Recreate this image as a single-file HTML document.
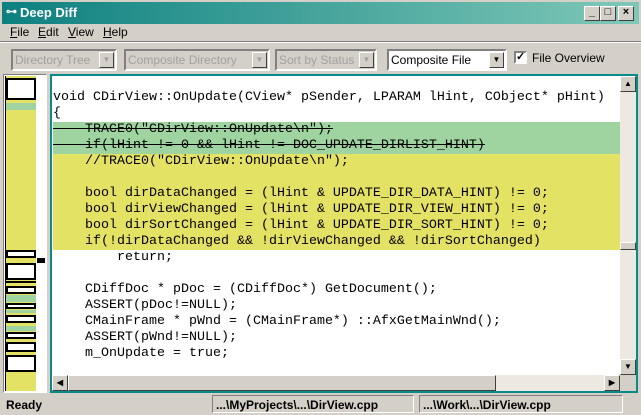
<!DOCTYPE html>
<html><head><style>
*{margin:0;padding:0;box-sizing:border-box}
body{width:641px;height:415px;background:#d4d0c8;font-family:"Liberation Sans",sans-serif;font-size:12px;position:relative;overflow:hidden}
.a{position:absolute}
.title{left:0;top:0;width:641px;height:24px;background:linear-gradient(90deg,#0d8080,#7fc8b8);border:2px solid #d4d0c8;border-bottom:0}
.title span{position:absolute;left:18px;top:3px;color:#fff;font-weight:bold;font-size:13px}
.btn{width:16px;height:14px;background:#d4d0c8;border:1px solid;border-color:#fff #404040 #404040 #fff;top:4px;font-size:11px;text-align:center;line-height:11px;font-weight:bold}
.menu span{position:absolute;top:25px;font-size:12px}
.combo{height:22px;border:2px solid;border-color:#808080 #fff #fff #808080;background:#d4d0c8;top:49px;color:#a0a0a0;font-size:12px;padding:2px 0 0 2px}
.combo i{position:absolute;right:1px;top:1px;width:15px;height:16px;background:#d4d0c8;border:1px solid;border-color:#fff #404040 #404040 #fff;font-style:normal;font-size:8px;text-align:center;line-height:14px;color:#a0a0a0}
.code{left:50px;top:74px;width:588px;height:319px;border:2px solid #0a8a8a;background:#fff}
.ln{position:absolute;left:1px;font-family:"Liberation Mono",monospace;font-size:13.33px;line-height:16px;height:16px;white-space:pre;width:567px}
.g{background:#9fd4a0}.y{background:#e4e264}
.s{text-decoration:line-through}
.ov div{position:absolute;left:6px;width:30px}
.wb{background:#fff;border:2px solid #000}
.status span{position:absolute;top:398px;font-weight:bold;font-size:12px}
.pan{top:395px;height:18px;border:1px solid;border-color:#808080 #fff #fff #808080}
</style></head><body>
<div class="a title"><span style="left:4px;font-size:11px">⊶</span><span>Deep Diff</span>
<div class="a btn" style="left:582px;top:4px;height:15px">_</div><div class="a btn" style="left:598px;top:4px;height:15px">□</div><div class="a btn" style="left:616px;top:4px;height:15px">×</div></div>
<div class="menu"><span style="left:10px"><u>F</u>ile</span><span style="left:38px"><u>E</u>dit</span><span style="left:68px"><u>V</u>iew</span><span style="left:103px"><u>H</u>elp</span></div>
<div class="a" style="left:0;top:41px;width:641px;height:2px;border-top:1px solid #808080;border-bottom:1px solid #fff"></div>
<div class="a combo" style="left:11px;width:106px">Directory Tree<i>▼</i></div>
<div class="a combo" style="left:124px;width:146px">Composite Directory<i>▼</i></div>
<div class="a combo" style="left:275px;width:102px">Sort by Status<i>▼</i></div>
<div class="a combo" style="left:387px;width:120px;background:#fff;color:#000">Composite File<i style="color:#000">▼</i></div>
<div class="a" style="left:514px;top:51px;width:13px;height:13px;background:#fff;border:2px solid;border-color:#808080 #fff #fff #808080;font-size:11px;line-height:9px;font-weight:bold">✓</div>
<div class="a" style="left:532px;top:51px;font-size:12px">File Overview</div>
<div class="a" style="left:3px;top:74px;width:44px;height:319px;border:1px solid;border-color:#808080 #fff #fff #808080;background:#fff"></div>
<div class="a" style="left:5px;top:76px;width:31px;height:315px;background:#e4e264;border-left:1px solid #000"></div>
<div class="ov">
<div class="wb" style="top:78px;height:22px"></div>
<div class="g" style="top:103px;height:7px"></div>
<div class="wb" style="top:250px;height:8px"></div>
<div class="wb" style="top:263px;height:17px"></div>
<div style="top:281px;height:2px;background:#000"></div>
<div class="wb" style="top:286px;height:8px"></div>
<div class="g" style="top:295px;height:7px"></div>
<div class="wb" style="top:303px;height:6px"></div>
<div class="g" style="top:310px;height:3px"></div>
<div class="wb" style="top:315px;height:8px"></div>
<div class="g" style="top:326px;height:5px"></div>
<div class="wb" style="top:332px;height:7px"></div>
<div class="wb" style="top:342px;height:10px"></div>
<div class="wb" style="top:355px;height:17px"></div>
</div>
<div class="a" style="left:37px;top:258px;width:8px;height:5px;background:#000"></div>
<div class="a code">
<div class="ln" style="top:14px">void CDirView::OnUpdate(CView* pSender, LPARAM lHint, CObject* pHint)</div>
<div class="ln" style="top:30px">{</div>
<div class="ln g" style="top:46px"><span class="s">    TRACE0("CDirView::OnUpdate\n");</span></div>
<div class="ln g" style="top:62px"><span class="s">    if(lHint != 0 &amp;&amp; lHint != DOC_UPDATE_DIRLIST_HINT)</span></div>
<div class="ln y" style="top:78px">    //TRACE0("CDirView::OnUpdate\n");</div>
<div class="ln y" style="top:94px"> </div>
<div class="ln y" style="top:110px">    bool dirDataChanged = (lHint &amp; UPDATE_DIR_DATA_HINT) != 0;</div>
<div class="ln y" style="top:126px">    bool dirViewChanged = (lHint &amp; UPDATE_DIR_VIEW_HINT) != 0;</div>
<div class="ln y" style="top:142px">    bool dirSortChanged = (lHint &amp; UPDATE_DIR_SORT_HINT) != 0;</div>
<div class="ln y" style="top:158px">    if(!dirDataChanged &amp;&amp; !dirViewChanged &amp;&amp; !dirSortChanged)</div>
<div class="ln" style="top:174px">        return;</div>
<div class="ln" style="top:206px">    CDiffDoc * pDoc = (CDiffDoc*) GetDocument();</div>
<div class="ln" style="top:222px">    ASSERT(pDoc!=NULL);</div>
<div class="ln" style="top:238px">    CMainFrame * pWnd = (CMainFrame*) ::AfxGetMainWnd();</div>
<div class="ln" style="top:254px">    ASSERT(pWnd!=NULL);</div>
<div class="ln" style="top:270px">    m_OnUpdate = true;</div>
<div class="a" style="left:568px;top:0;width:16px;height:299px;background:#ede8e0"></div>
<div class="a btn" style="left:568px;top:0;height:16px;font-size:8px;line-height:14px">▲</div>
<div class="a btn" style="left:568px;top:166px;height:8px"></div>
<div class="a btn" style="left:568px;top:283px;height:16px;font-size:8px;line-height:14px">▼</div>
<div class="a" style="left:0;top:299px;width:568px;height:16px;background:#ede8e0"></div>
<div class="a btn" style="left:0;top:299px;height:16px;font-size:8px;line-height:14px">◀</div>
<div class="a btn" style="left:16px;top:299px;width:428px;height:16px"></div>
<div class="a btn" style="left:552px;top:299px;height:16px;font-size:8px;line-height:14px">▶</div>
<div class="a" style="left:568px;top:299px;width:16px;height:16px;background:#d4d0c8"></div>
</div>
<div class="status"><span style="left:6px">Ready</span>
<div class="a pan" style="left:212px;width:202px"></div><span style="left:216px">...\MyProjects\...\DirView.cpp</span>
<div class="a pan" style="left:419px;width:204px"></div><span style="left:423px">...\Work\...\DirView.cpp</span></div>
</body></html>
